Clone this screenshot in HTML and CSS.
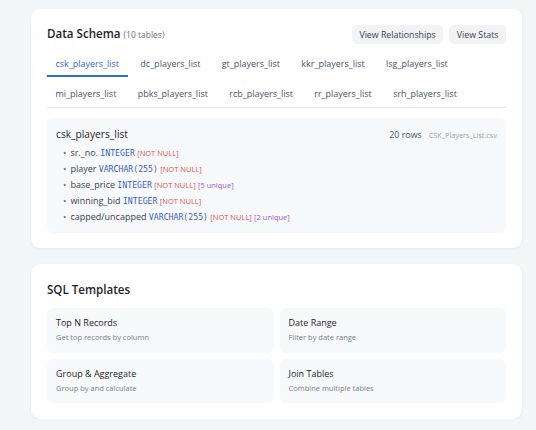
FILE: index.html
```html
<!DOCTYPE html>
<html>
<head>
<meta charset="utf-8">
<link rel="stylesheet" href="styles.css">
</head>
<body>
<div class="page">
  <section class="card">
    <div class="card-head">
      <h2 class="title">Data Schema <span class="count">(10 tables)</span></h2>
      <div class="actions">
        <button class="btn">View Relationships</button>
        <button class="btn">View Stats</button>
      </div>
    </div>
    <div class="tabs">
      <div class="tab active">csk_players_list</div>
      <div class="tab">dc_players_list</div>
      <div class="tab">gt_players_list</div>
      <div class="tab">kkr_players_list</div>
      <div class="tab">lsg_players_list</div>
      <div class="tab">mi_players_list</div>
      <div class="tab">pbks_players_list</div>
      <div class="tab">rcb_players_list</div>
      <div class="tab">rr_players_list</div>
      <div class="tab">srh_players_list</div>
    </div>
    <div class="schema">
      <div class="schema-head">
        <span class="schema-name">csk_players_list</span>
        <span class="meta"><span class="rows">20 rows</span><span class="file">CSK_Players_List.csv</span></span>
      </div>
      <ul class="cols">
        <li>sr._no. <span class="type">INTEGER</span> <span class="nn">[NOT NULL]</span></li>
        <li>player <span class="type">VARCHAR(255)</span> <span class="nn">[NOT NULL]</span></li>
        <li>base_price <span class="type">INTEGER</span> <span class="nn">[NOT NULL]</span> <span class="uq">[5 unique]</span></li>
        <li>winning_bid <span class="type">INTEGER</span> <span class="nn">[NOT NULL]</span></li>
        <li>capped/uncapped <span class="type">VARCHAR(255)</span> <span class="nn">[NOT NULL]</span> <span class="uq">[2 unique]</span></li>
      </ul>
    </div>
  </section>
  <section class="card card-sql">
    <h2 class="title sql">SQL Templates</h2>
    <div class="templates">
      <div class="tpl"><div class="tpl-name">Top N Records</div><div class="tpl-desc">Get top records by column</div></div>
      <div class="tpl"><div class="tpl-name">Date Range</div><div class="tpl-desc">Filter by date range</div></div>
      <div class="tpl"><div class="tpl-name">Group &amp; Aggregate</div><div class="tpl-desc">Group by and calculate</div></div>
      <div class="tpl"><div class="tpl-name">Join Tables</div><div class="tpl-desc">Combine multiple tables</div></div>
    </div>
  </section>
</div>
</body>
</html>
```
FILE: styles.css
```css
* { box-sizing: border-box; }
html, body { margin: 0; padding: 0; }
body {
  background: #f4f5f7;
  font-family: "Open Sans", "Noto Sans", sans-serif;
  color: #1f2328;
}
.page {
  padding: 9px 14px 0 31px;
  display: flex;
  flex-direction: column;
  gap: 16px;
  width: 536px;
}
.card {
  width: 491px;
  background: #fff;
  border-radius: 9px;
  box-shadow: 0 1px 3px rgba(0,0,0,0.06);
  padding: 16px 16px 15px;
}
.card-head {
  display: flex;
  justify-content: space-between;
  align-items: center;
  height: 19px;
  margin-bottom: 3px;
}
.title {
  margin: 0;
  font-size: 11.6px;
  line-height: 20px;
  font-weight: 600;
  color: #1f2328;
}
.count {
  font-size: 8.5px;
  font-weight: 400;
  color: #6b7280;
}
.actions { display: flex; gap: 6px; }
.btn {
  font-family: inherit;
  font-size: 8.8px;
  color: #374151;
  background: #f1f3f5;
  border: none;
  border-radius: 5px;
  padding: 0 7.5px;
  height: 19px;
}
.tabs {
  display: flex;
  flex-wrap: wrap;
  column-gap: 4.3px;
  border-bottom: 1px solid #e5e7eb;
  margin-bottom: 10px;
}
.tab {
  font-size: 9px;
  color: #4b5563;
  padding: 5px 8.5px 0;
  height: 30px;
  line-height: 23px;
  border-bottom: 2px solid transparent;
}
.tab.active {
  color: #2f6bd8;
  border-bottom-color: #2f6bd8;
}
.schema {
  background: #f8f9fb;
  border-radius: 6px;
  padding: 8px 9px 9px;
}
.schema-head {
  display: flex;
  justify-content: space-between;
  align-items: baseline;
  margin-bottom: 3px;
  height: 16px;
  line-height: 16px;
}
.schema-name { font-size: 10.2px; color: #1f2328; }
.meta { display: flex; align-items: baseline; gap: 7px; }
.rows { font-size: 8.9px; color: #4b5563; }
.file { font-size: 7.3px; color: #9ca3af; }
.cols {
  list-style: none;
  margin: 0;
  padding: 0 0 0 7px;
}
.cols li {
  font-size: 9px;
  color: #374151;
  line-height: 15.9px;
  height: 15.9px;
  white-space: nowrap;
}
.cols li::before {
  content: "•";
  color: #6b7280;
  margin-right: 4px;
}
.type, .nn, .uq { line-height: 1; }
.type {
  font-family: "DejaVu Sans Mono", "Liberation Mono", monospace;
  font-size: 8.2px;
  color: #3a5fc8;
}
.nn { font-size: 7.5px; color: #d9534f; }
.uq { font-size: 7.5px; color: #9b59d0; }
.card-sql { padding-bottom: 16px; }
.sql { margin-bottom: 8px; }
.templates {
  display: grid;
  grid-template-columns: 1fr 1fr;
  gap: 6px;
}
.tpl {
  background: #f8f9fb;
  border-radius: 6px;
  padding: 8px 9px;
  height: 44.5px;
}
.tpl-name { font-size: 9px; color: #1f2328; line-height: 14px; }
.tpl-desc { font-size: 7.5px; color: #7b8088; line-height: 14px; }
```
